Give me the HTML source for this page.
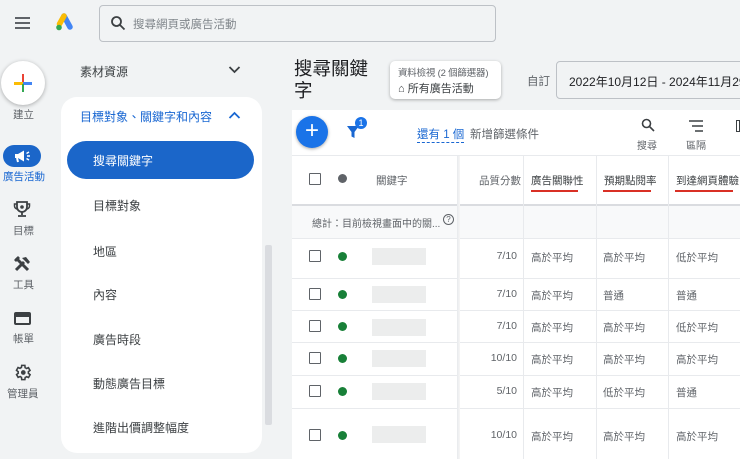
<!DOCTYPE html>
<html><head><meta charset="utf-8"><style>
*{margin:0;padding:0;box-sizing:border-box}
body{width:740px;height:459px;overflow:hidden;background:#f1f3f4;font-family:"Liberation Sans","Noto Sans CJK TC",sans-serif;color:#3c4043;position:relative}
.a{position:absolute;white-space:nowrap}
.s{font-size:11px;color:#5f6368}
.it{font-size:12px;color:#3c4043;left:93px}
.cb{position:absolute;width:12px;height:12px;border:1.6px solid #5f6368;border-radius:1px;left:309px}
.dot{position:absolute;width:9px;height:9px;border-radius:50%;background:#188038;left:338px}
.ph{position:absolute;left:372px;width:54px;height:17px;background:#eceded}
.c{position:absolute;font-size:10.5px;color:#5f6368}
.hl{position:absolute;left:292px;right:0;height:1px;background:#e8eaed}
</style></head><body>
<!-- top -->
<div class="a" style="left:15px;top:17px;width:15px;height:2px;background:#5f6368;box-shadow:0 5px 0 #5f6368,0 10px 0 #5f6368"></div>
<svg class="a" style="left:55px;top:13px" width="20" height="19" viewBox="0 0 20 19"><path d="M9 3 L15 14" stroke="#4285f4" stroke-width="5.5" stroke-linecap="round"/><path d="M9 3 L4.5 11" stroke="#fbbc04" stroke-width="5.5" stroke-linecap="round"/><circle cx="4" cy="14.5" r="2.8" fill="#34a853"/></svg>
<div class="a" style="left:99px;top:5px;width:397px;height:37px;border:1px solid #bdc1c6;border-radius:4px;background:#f1f3f4"></div>
<svg class="a" style="left:110px;top:15px" width="16" height="16" viewBox="0 0 16 16"><circle cx="6.5" cy="6.5" r="4.5" fill="none" stroke="#3c4043" stroke-width="1.8"/><path d="M10 10l4.5 4.5" stroke="#3c4043" stroke-width="1.8"/></svg>
<div class="a" style="left:133px;top:16px;font-size:11.5px;color:#80868b">搜尋網頁或廣告活動</div>
<!-- left rail -->
<div class="a" style="left:1px;top:61px;width:44px;height:44px;border-radius:50%;background:#fff;box-shadow:0 1px 4px rgba(0,0,0,.3)"></div>
<div class="a" style="left:14px;top:82px;width:9px;height:2.5px;background:#fbbc04"></div>
<div class="a" style="left:23px;top:82px;width:9px;height:2.5px;background:#4285f4"></div>
<div class="a" style="left:21.5px;top:74px;width:2.5px;height:8px;background:#ea4335"></div>
<div class="a" style="left:21.5px;top:84px;width:2.5px;height:8px;background:#34a853"></div>
<div class="a s" style="left:13px;top:107px;font-size:10.5px">建立</div>
<div class="a" style="left:3px;top:145px;width:38px;height:22px;border-radius:11px;background:#1b66c9"></div>
<svg class="a" style="left:13px;top:149px" width="18" height="14" viewBox="0 0 18 14"><path d="M2 5h3l6-3.5v11L5 9H2z" fill="#fff"/><path d="M4 9l1 4" stroke="#fff" stroke-width="2"/><path d="M13.5 4.5l2.5-1.5M14 7h3M13.5 9.5l2.5 1.5" stroke="#fff" stroke-width="1.4"/></svg>
<div class="a" style="left:3px;top:169px;font-size:10.5px;color:#1967d2">廣告活動</div>
<svg class="a" style="left:13px;top:200px" width="18" height="18" viewBox="0 0 18 18"><path d="M4 2h10v5a5 5 0 0 1-10 0z" fill="none" stroke="#3c4043" stroke-width="1.8"/><path d="M4 4H1.5v2a3 3 0 0 0 3 3M14 4h2.5v2a3 3 0 0 1-3 3" fill="none" stroke="#3c4043" stroke-width="1.5"/><circle cx="9" cy="7" r="1.8" fill="#3c4043"/><path d="M9 12v3M5 16h8" stroke="#3c4043" stroke-width="1.8"/></svg>
<div class="a s" style="left:13px;top:223px;font-size:10.5px">目標</div>
<svg class="a" style="left:13px;top:255px" width="18" height="18" viewBox="0 0 18 18"><path d="M3 15L11 7" stroke="#3c4043" stroke-width="3"/><path d="M9 3l6 6 2-2-4-5z" fill="#3c4043"/><path d="M3 3l12 12" stroke="#3c4043" stroke-width="3"/><path d="M1 5l4-4 2 2-4 4z" fill="#3c4043"/></svg>
<div class="a s" style="left:13px;top:277px;font-size:10.5px">工具</div>
<div class="a" style="left:14px;top:312px;width:17px;height:13px;border:2px solid #3c4043;border-radius:2px;border-top-width:5px"></div>
<div class="a s" style="left:13px;top:331px;font-size:10.5px">帳單</div>
<svg class="a" style="left:13px;top:363px" width="19" height="19" viewBox="0 0 24 24"><path d="M19.4 13a7.5 7.5 0 0 0 0-2l2.1-1.6-2-3.5-2.5 1a7 7 0 0 0-1.7-1L15 3h-4l-.4 2.7a7 7 0 0 0-1.7 1l-2.5-1-2 3.5L6.6 11a7.5 7.5 0 0 0 0 2l-2.1 1.6 2 3.5 2.5-1a7 7 0 0 0 1.7 1L11 21h4l.4-2.7a7 7 0 0 0 1.7-1l2.5 1 2-3.5z" fill="none" stroke="#3c4043" stroke-width="2"/><circle cx="13" cy="12" r="3" fill="#3c4043"/></svg>
<div class="a s" style="left:7px;top:386px;font-size:10.5px">管理員</div>
<!-- nav -->
<div class="a" style="left:80px;top:63px;font-size:12px">素材資源</div>
<svg class="a" style="left:228px;top:65px" width="13" height="9"><path d="M1.5 2l5 5 5-5" fill="none" stroke="#3c4043" stroke-width="1.8"/></svg>
<div class="a" style="left:61px;top:97px;width:201px;height:356px;background:#fff;border-radius:16px"></div>
<div class="a" style="left:80px;top:108px;font-size:12px;color:#1967d2">目標對象、關鍵字和內容</div>
<svg class="a" style="left:228px;top:111px" width="13" height="9"><path d="M1.5 7l5-5 5 5" fill="none" stroke="#1967d2" stroke-width="1.8"/></svg>
<div class="a" style="left:67px;top:141px;width:187px;height:38px;border-radius:19px;background:#1b66c9"></div>
<div class="a it" style="top:152px;color:#fff">搜尋關鍵字</div>
<div class="a it" style="top:197px">目標對象</div>
<div class="a it" style="top:243px">地區</div>
<div class="a it" style="top:286px">內容</div>
<div class="a it" style="top:331px">廣告時段</div>
<div class="a it" style="top:375px">動態廣告目標</div>
<div class="a it" style="top:419px">進階出價調整幅度</div>
<div class="a" style="left:265px;top:245px;width:7px;height:180px;background:#dadce0;border-radius:2px"></div>
<!-- header -->
<div class="a" style="left:294px;top:58px;font-size:18.5px;color:#202124;line-height:22px;white-space:normal;width:80px">搜尋關鍵<br>字</div>
<div class="a" style="left:390px;top:61px;width:111px;height:38px;background:#fff;border-radius:5px;box-shadow:0 1px 3px rgba(0,0,0,.3)"></div>
<div class="a" style="left:398px;top:65px;font-size:9.5px;color:#5f6368;letter-spacing:-0.2px">資料檢視 (2 個篩選器)</div>
<div class="a" style="left:398px;top:80px;font-size:11px;color:#3c4043">⌂ 所有廣告活動</div>
<div class="a" style="left:527px;top:73px;font-size:11.5px;color:#5f6368">自訂</div>
<div class="a" style="left:556px;top:61px;width:200px;height:38px;border:1px solid #bdc1c6;border-radius:4px"></div>
<div class="a" style="left:569px;top:73px;font-size:12px;color:#202124">2022年10月12日 - 2024年11月29日</div>
<!-- table panel -->
<div class="a" style="left:292px;top:110px;width:448px;height:349px;background:#fff"></div>
<div class="a" style="left:296px;top:116px;width:32px;height:32px;border-radius:50%;background:#1a73e8;box-shadow:0 1px 3px rgba(0,0,0,.35);color:#fff;font-size:24px;line-height:30px;text-align:center">+</div>
<svg class="a" style="left:346px;top:124px" width="14" height="16"><path d="M1 2h12l-4.5 6v6l-3-1.5V8z" fill="#1967d2"/></svg>
<div class="a" style="left:355px;top:117px;width:12px;height:12px;border-radius:50%;background:#1a73e8;color:#fff;font-size:9px;text-align:center;line-height:12px">1</div>
<div class="a" style="left:417px;top:126px;font-size:11.5px;color:#1967d2;border-bottom:1px dashed #1967d2">還有 1 個</div>
<div class="a" style="left:470px;top:126px;font-size:11.5px;color:#5f6368">新增篩選條件</div>
<svg class="a" style="left:641px;top:118px" width="14" height="14"><circle cx="5.5" cy="5.5" r="4" fill="none" stroke="#3c4043" stroke-width="1.6"/><path d="M8.5 8.5l4.5 4.5" stroke="#3c4043" stroke-width="1.6"/></svg>
<div class="a" style="left:637px;top:137px;font-size:10px;color:#5f6368">搜尋</div>
<svg class="a" style="left:688px;top:120px" width="16" height="12"><path d="M1 1h14M4 6h11M7 11h8" stroke="#3c4043" stroke-width="1.4"/></svg>
<div class="a" style="left:686px;top:137px;font-size:10px;color:#5f6368">區隔</div>
<div class="a" style="left:736px;top:120px;width:4px;height:12px;border:1.5px solid #3c4043"></div>
<div class="hl" style="top:155px"></div>
<div class="cb" style="top:173px"></div>
<div class="dot" style="top:174px;background:#5f6368"></div>
<div class="c" style="left:376px;top:173px">關鍵字</div>
<div class="c" style="left:479px;top:173px">品質分數</div>
<div class="c" style="left:531px;top:173px;color:#3c4043">廣告關聯性</div>
<div class="c" style="left:604px;top:173px;color:#3c4043">預期點閱率</div>
<div class="c" style="left:676px;top:173px;color:#3c4043">到達網頁體驗</div>
<div class="a" style="left:531px;top:190px;width:47px;height:2px;background:#d93025"></div>
<div class="a" style="left:603px;top:190px;width:48px;height:2px;background:#d93025"></div>
<div class="a" style="left:675px;top:190px;width:58px;height:2px;background:#d93025"></div>
<div class="a" style="left:292px;top:204px;width:448px;height:2px;background:#dadce0"></div>
<div class="a" style="left:292px;top:206px;width:448px;height:32px;background:#f8f9fa"></div>
<div class="c" style="left:312px;top:215px;font-size:10px">總計：目前檢視畫面中的關...</div>
<div class="a" style="left:443px;top:214px;width:11px;height:11px;border:1.3px solid #5f6368;border-radius:50%;font-size:8px;text-align:center;line-height:9px;color:#5f6368">?</div>
<div class="hl" style="top:238px"></div>
<div class="hl" style="top:278px"></div>
<div class="hl" style="top:310px"></div>
<div class="hl" style="top:342px"></div>
<div class="hl" style="top:375px"></div>
<div class="hl" style="top:408px"></div>
<div class="a" style="left:457px;top:156px;width:3px;height:303px;background:linear-gradient(90deg,#e8eaed,#f6f6f6)"></div>
<div class="a" style="left:523px;top:156px;width:1px;height:303px;background:#e8eaed"></div>
<div class="a" style="left:596px;top:156px;width:1px;height:303px;background:#e8eaed"></div>
<div class="a" style="left:668px;top:156px;width:1px;height:303px;background:#e8eaed"></div>
<!-- rows -->
<div class="cb" style="top:250px"></div><div class="dot" style="top:252px"></div><div class="ph" style="top:248px"></div>
<div class="c" style="left:486px;top:250px;width:31px;text-align:right">7/10</div><div class="c" style="left:531px;top:250px">高於平均</div><div class="c" style="left:603px;top:250px">高於平均</div><div class="c" style="left:676px;top:250px">低於平均</div>
<div class="cb" style="top:288px"></div><div class="dot" style="top:290px"></div><div class="ph" style="top:286px"></div>
<div class="c" style="left:486px;top:288px;width:31px;text-align:right">7/10</div><div class="c" style="left:531px;top:288px">高於平均</div><div class="c" style="left:603px;top:288px">普通</div><div class="c" style="left:676px;top:288px">普通</div>
<div class="cb" style="top:320px"></div><div class="dot" style="top:322px"></div><div class="ph" style="top:319px"></div>
<div class="c" style="left:486px;top:320px;width:31px;text-align:right">7/10</div><div class="c" style="left:531px;top:320px">高於平均</div><div class="c" style="left:603px;top:320px">高於平均</div><div class="c" style="left:676px;top:320px">低於平均</div>
<div class="cb" style="top:352px"></div><div class="dot" style="top:354px"></div><div class="ph" style="top:350px"></div>
<div class="c" style="left:486px;top:352px;width:31px;text-align:right">10/10</div><div class="c" style="left:531px;top:352px">高於平均</div><div class="c" style="left:603px;top:352px">高於平均</div><div class="c" style="left:676px;top:352px">高於平均</div>
<div class="cb" style="top:385px"></div><div class="dot" style="top:387px"></div><div class="ph" style="top:383px"></div>
<div class="c" style="left:486px;top:385px;width:31px;text-align:right">5/10</div><div class="c" style="left:531px;top:385px">高於平均</div><div class="c" style="left:603px;top:385px">低於平均</div><div class="c" style="left:676px;top:385px">普通</div>
<div class="cb" style="top:429px"></div><div class="dot" style="top:431px"></div><div class="ph" style="top:426px"></div>
<div class="c" style="left:486px;top:429px;width:31px;text-align:right">10/10</div><div class="c" style="left:531px;top:429px">高於平均</div><div class="c" style="left:603px;top:429px">高於平均</div><div class="c" style="left:676px;top:429px">高於平均</div>
</body></html>
